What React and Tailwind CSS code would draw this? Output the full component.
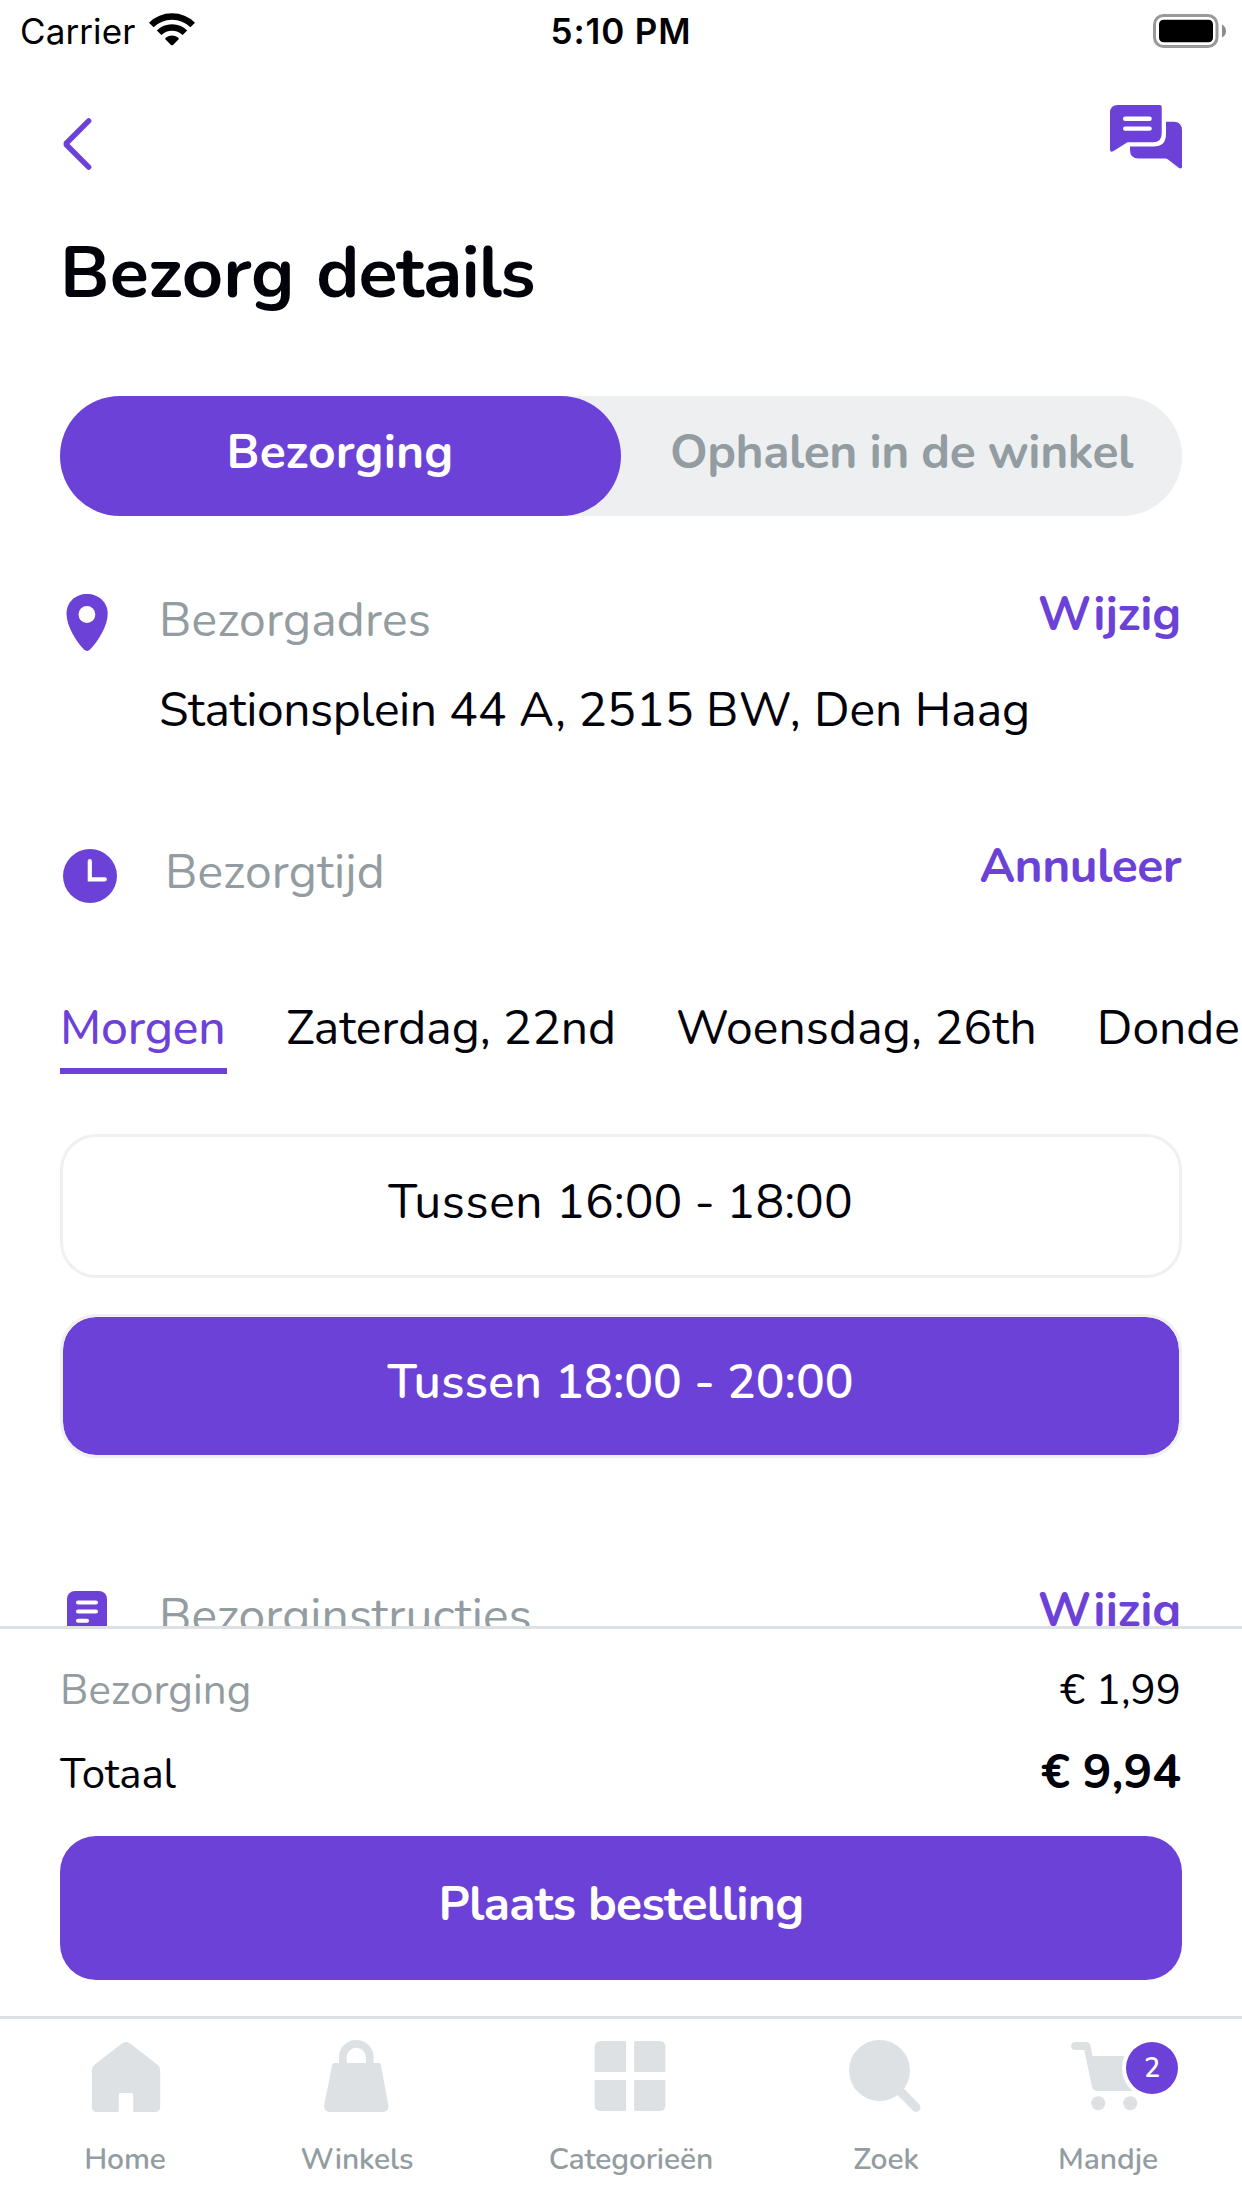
import React from "react";

const WifiIcon = () => (
  <svg className="h-[34px] w-[46px]" viewBox="0 0 46 34" fill="none" stroke="#000" strokeWidth="6.5">
    <path d="M2.3 12A29.3 29.3 0 0 1 43.7 12" />
    <path d="M10.1 19.8A18.3 18.3 0 0 1 35.9 19.8" />
    <path d="M22 31.9L16.6 26.4Q15.8 25.4 16.9 24.6A10.4 10.4 0 0 1 29.1 24.6Q30.2 25.4 29.4 26.4L24 31.9Q23 32.8 22 31.9Z" fill="#000" stroke="none" />
  </svg>
);

const BatteryIcon = () => (
  <svg className="h-[36px] w-[78px]" viewBox="0 0 78 36">
    <rect x="4.5" y="2.5" width="62.5" height="31" rx="9" fill="none" stroke="#999" strokeWidth="3" />
    <rect x="9" y="6.8" width="54" height="22.4" rx="4.5" fill="#000" />
    <path d="M72 11.5q4 2 4 6.5t-4 6.5z" fill="#8c8c8c" />
  </svg>
);

const BackIcon = () => (
  <svg className="mt-[13px] -mb-1 h-[52px] w-[34px]" viewBox="0 0 34 52" fill="none" stroke="#6c41d8" strokeWidth="5.4" strokeLinecap="round" strokeLinejoin="bevel">
    <path d="M28.7 2.9L5.6 26L28.7 49.1" />
  </svg>
);

const ChatIcon = () => (
  <svg className="h-[64px] w-[72px]" viewBox="0 0 72 64" fill="#6c41d8">
    <path d="M8 0H49.8Q51.7 0 51.7 2V28.5Q51.7 37.3 43 37.3H18.5Q16.8 37.3 15.5 38.4L3.2 46.3Q0 47.8 0 44.5V8Q0 0 8 0Z" />
    <path d="M56 16.7H63.5Q72 16.7 72 25.5V61.5Q72 64.4 69 63L58 54.6Q56.8 53.6 55 53.6H28.5Q20 53.6 20 45V41.5H43.5Q56 41.5 56 29Z" />
    <path d="M15.2 13.7H39.6M15.2 23.6H39.6" stroke="#fff" strokeWidth="4.4" strokeLinecap="round" />
  </svg>
);

const PinIcon = () => (
  <svg className="mt-[13px] h-[58px] w-[54px]" viewBox="0 0 54 58">
    <path d="M27 0C15.5 0 6.5 8.2 6.5 19.5C6.5 32 15.5 46.5 24 55.6Q27 58.4 30 55.6C38.5 46.5 47.7 32 47.7 19.5C47.7 8.2 38.5 0 27 0Z" fill="#6c41d8" />
    <circle cx="26.9" cy="20.5" r="8.4" fill="#fff" />
  </svg>
);

const ClockIcon = () => (
  <svg className="mt-[16px] h-[54px] w-[60px]" viewBox="0 0 60 54">
    <circle cx="30" cy="27" r="27" fill="#6c41d8" />
    <path d="M29.8 12V30.3H44.8" fill="none" stroke="#fff" strokeWidth="4.2" strokeLinecap="round" />
  </svg>
);

const NoteIcon = () => (
  <svg className="mt-[14px] h-[54px] w-[54px]" viewBox="0 0 54 54">
    <rect x="7" y="0" width="40" height="54" rx="8" fill="#6c41d8" />
    <path d="M18 11.4H36M18 20.5H36M18 29.7H27" stroke="#fff" strokeWidth="4" strokeLinecap="round" />
  </svg>
);

const HomeIcon = () => (
  <svg className="h-[72px] w-[76px]" viewBox="-2 0 76 72" fill="#dde1e4">
    <path d="M32.6 3.8Q37 .2 41.4 3.8L69.2 25.3Q71.2 27.4 71.2 30V67Q71.2 72 66 72H45.8Q44.2 72 44.2 70.5V54.4Q44.2 53 42.8 53H31.2Q29.8 53 29.8 54.4V70.5Q29.8 72 28.2 72H8Q2.9 72 2.9 67V30Q2.9 27.4 4.9 25.3Z" />
  </svg>
);

const BagIcon = () => (
  <svg className="h-[72px] w-[76px]" viewBox="-2 0 76 72" fill="#dde1e4">
    <path d="M13 23H58Q59.4 23 59.7 24.5L67.4 65.5Q68 72 61.5 72H9Q2.5 72 3.1 65.5L11.3 24.5Q11.6 23 13 23Z" />
    <path d="M21.9 25V17.3a13.4 13.4 0 0 1 26.8 0V25" fill="none" stroke="#dde1e4" strokeWidth="7.8" />
  </svg>
);

const GridIcon = () => (
  <svg className="h-[72px] w-[76px]" viewBox="-2 0 76 72" fill="#dde1e4">
    <path d="M6 1H29.7Q31 1 31 2.3V30.7Q31 32 29.7 32H1Q-.4 32-.4 30.7V7Q-.4 1 6 1Z" />
    <path d="M40.5 1H64.5Q70.4 1 70.4 7V30.7Q70.4 32 69 32H40.5Q39.1 32 39.1 30.7V2.3Q39.1 1 40.5 1Z" />
    <path d="M1 40H29.7Q31 40 31 41.3V69.7Q31 71 29.7 71H6Q-.4 71-.4 65V41.3Q-.4 40 1 40Z" />
    <path d="M40.5 40H69Q70.4 40 70.4 41.3V65Q70.4 71 64.5 71H40.5Q39.1 71 39.1 69.7V41.3Q39.1 40 40.5 40Z" />
  </svg>
);

const SearchIcon = () => (
  <svg className="h-[72px] w-[76px]" viewBox="-2 0 76 72">
    <circle cx="29.5" cy="30.5" r="30.5" fill="#dde1e4" />
    <path d="M48 49L66 67.4" stroke="#dde1e4" strokeWidth="9" strokeLinecap="round" />
  </svg>
);

const CartIcon = () => (
  <svg className="h-[72px] w-[76px]" viewBox="-2 0 76 72" fill="#dde1e4">
    <path d="M3.2 2H14Q17.8 2 18.4 5.6L20.4 16H66V51H25.5Q21 51 20 46.8L12.3 10H3.2A4 4 0 0 1 3.2 2Z" />
    <circle cx="26.2" cy="63.3" r="7" />
    <circle cx="58.2" cy="63.3" r="7" />
  </svg>
);

function NavItem({ icon, children }) {
  return (
    <div className="flex flex-col items-center pt-[21px]">
      <div className="relative h-[72px]">{icon}</div>
      <span className="mt-7 text-[30px] leading-10 font-semibold tracking-[-0.1px] text-[#929ca1]">{children}</span>
    </div>
  );
}

export default function App() {
  return (
    <div className="flex h-[2208px] w-[1242px] flex-col overflow-hidden bg-white font-[Nunito,Lato,sans-serif] text-[48px] leading-[66px] text-[#02020a]">
      <main className="h-[1626px] shrink-0 overflow-hidden">
        <div className="grid h-[62px] grid-cols-3 items-center font-[Inter,sans-serif] text-[35px] text-black">
          <div className="flex items-center pl-5">
            <span className="-mt-0.5 w-[129px] tracking-[0.1px]">Carrier</span>
            <span className="-mt-1"><WifiIcon /></span>
          </div>
          <span className="-mt-0.5 text-center font-semibold tracking-[0.9px]">5:10 PM</span>
          <div className="-mt-0.5 flex justify-end pr-[14px]"><BatteryIcon /></div>
        </div>

        <header className="flex items-start justify-between px-[60px] pt-[43px]">
          <BackIcon />
          <ChatIcon />
        </header>

        <h1 className="mt-[55px] pl-[60px] text-[72px] leading-[98px] font-bold">
          <span className="tracking-[0.1px] [word-spacing:2px]">Bezorg </span>
          <span className="tracking-[-1px]">details</span>
        </h1>

        <div className="mx-[60px] mt-[74px] grid h-[120px] grid-cols-2 rounded-full bg-[#eeeff1] text-center font-bold">
          <div className="flex items-center justify-center rounded-full bg-[#6c41d8] pr-px pb-2 tracking-[0.2px] text-white">Bezorging</div>
          <div className="flex items-center justify-center pb-2 tracking-[-0.45px] text-[#929ca1]">Ophalen in de winkel</div>
        </div>

        <section className="mt-[65px] px-[60px]">
          <div className="flex items-start">
            <PinIcon />
            <span className="mt-1.5 ml-[45px] flex-1 tracking-[0.15px] text-[#929ca1]">Bezorgadres</span>
            <span className="mr-px font-bold tracking-[-0.2px] text-[#6c41d8]">Wijzig</span>
          </div>
          <p className="mt-6 ml-[99px]">
            <span className="tracking-[-0.4px]">Stationsplein</span> 44 A, 2515 <span className="tracking-[0.8px]">BW,</span> Den Haag
          </p>
        </section>

        <section className="mt-[90px] flex items-start px-[60px]">
          <ClockIcon />
          <span className="mt-1.5 ml-[45px] flex-1 tracking-[0.1px] text-[#929ca1]">Bezorgtijd</span>
          <span className="mr-px font-bold tracking-[-0.5px] text-[#6c41d8]">Annuleer</span>
        </section>

        <div className="mt-[90px] flex gap-[60px] overflow-hidden pl-[60px] whitespace-nowrap">
          <span className="w-[167px] border-b-[6px] border-[#6c41d8] pb-[7px] font-medium tracking-[-0.2px] text-[#6c41d8]">Morgen</span>
          <span className="-ml-px">Zaterdag, 22nd</span>
          <span className="tracking-[0.1px]">Woensdag, 26th</span>
          <span>Donde</span>
        </div>

        <div className="mt-[60px] flex flex-col gap-9 px-[60px]">
          <div className="flex h-36 items-center justify-center rounded-[36px] border-[3px] border-[#eff0f1] pr-px pb-2 whitespace-pre">
            <span className="tracking-[0.6px]">Tussen </span>16:00<span className="tracking-[-0.3px]"> - </span>18:00
          </div>
          <div className="flex h-36 items-center justify-center rounded-[36px] border-[3px] border-[#eff0f1] bg-[#6c41d8] bg-clip-padding pr-px pb-2 font-semibold whitespace-pre text-white">
            <span className="tracking-[0.3px]">Tussen </span>18:00<span className="tracking-[-0.3px]"> - </span>20:00
          </div>
        </div>

        <section className="mt-[119px] flex items-start px-[60px]">
          <NoteIcon />
          <span className="mt-1.5 ml-[45px] flex-1 text-[#929ca1]">Bezorginstructies</span>
          <span className="mr-px font-bold tracking-[-0.2px] text-[#6c41d8]">Wijzig</span>
        </section>
      </main>

      <div className="h-[390px] shrink-0 border-t-[3px] border-[#dde1e4] px-[60px] pt-[33px]">
        <div className="flex justify-between text-[42px] leading-[58px]">
          <span className="tracking-[0.1px] text-[#929ca1]">Bezorging</span>
          <span className="mr-px">€ 1,99</span>
        </div>
        <div className="mt-[19px] flex h-[66px] items-baseline justify-between">
          <span className="text-[42px] leading-[58px] tracking-[-0.2px]">Totaal</span>
          <span className="mr-px font-bold">€ 9,94</span>
        </div>
        <div className="mt-[31px] flex h-36 items-center justify-center rounded-[36px] bg-[#6c41d8] pb-2 font-bold tracking-[-0.65px] text-white">Plaats bestelling</div>
      </div>

      <nav className="grid flex-1 grid-cols-[250px_214px_334px_176px_268px] border-t-[3px] border-[#dde1e4]">
        <NavItem icon={<HomeIcon />}>Home</NavItem>
        <NavItem icon={<BagIcon />}>Winkels</NavItem>
        <NavItem icon={<GridIcon />}>Categorieën</NavItem>
        <NavItem icon={<SearchIcon />}>Zoek</NavItem>
        <NavItem
          icon={
            <>
              <CartIcon />
              <span className="absolute top-0.5 left-14 flex size-[52px] items-center justify-center rounded-full bg-[#6c41d8] text-[27px] leading-none font-semibold text-white ring-4 ring-white">2</span>
            </>
          }
        >
          Mandje
        </NavItem>
      </nav>
    </div>
  );
}
